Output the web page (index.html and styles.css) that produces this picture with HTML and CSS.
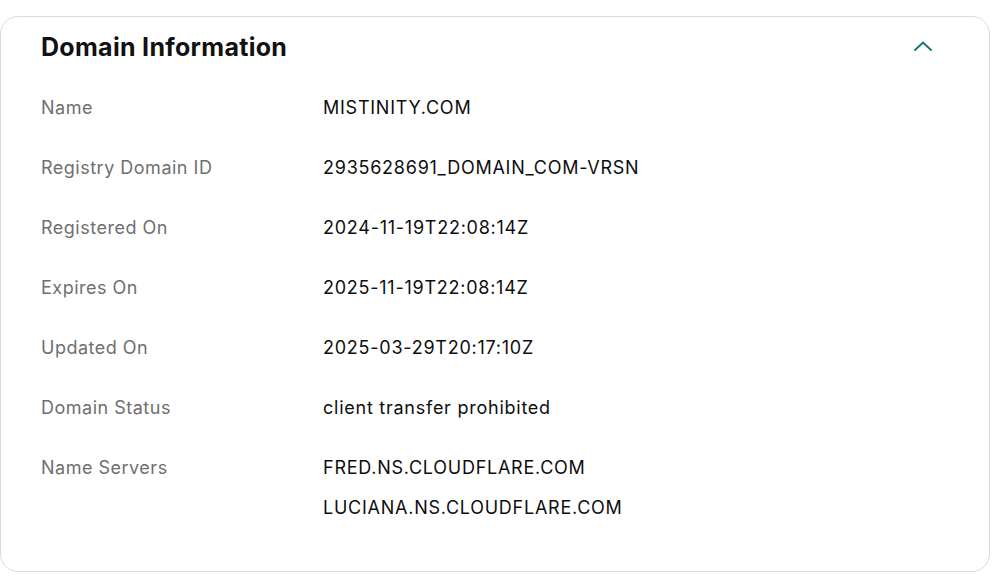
FILE: index.html
```html
<!DOCTYPE html>
<html lang="en">
<head>
<meta charset="utf-8">
<title>Domain Information</title>
<link rel="stylesheet" href="styles.css">
</head>
<body>
<section class="card">
  <header class="card-header">
    <h2 class="card-title">Domain Information</h2>
    <button class="toggle" aria-label="Collapse">
      <svg width="20" height="12" viewBox="0 0 20 12" aria-hidden="true">
        <path d="M2 10 L10 2.5 L18 10" fill="none" stroke="#137a78" stroke-width="2" stroke-linecap="round" stroke-linejoin="miter"/>
      </svg>
    </button>
  </header>
  <dl class="info">
    <dt>Name</dt>
    <dd>MISTINITY.COM</dd>
    <dt>Registry Domain ID</dt>
    <dd>2935628691_DOMAIN_COM-VRSN</dd>
    <dt>Registered On</dt>
    <dd>2024-11-19T22:08:14Z</dd>
    <dt>Expires On</dt>
    <dd>2025-11-19T22:08:14Z</dd>
    <dt>Updated On</dt>
    <dd>2025-03-29T20:17:10Z</dd>
    <dt>Domain Status</dt>
    <dd>client transfer prohibited</dd>
    <dt>Name Servers</dt>
    <dd class="list">
      <span>FRED.NS.CLOUDFLARE.COM</span>
      <span>LUCIANA.NS.CLOUDFLARE.COM</span>
    </dd>
  </dl>
</section>
</body>
</html>
```

FILE: styles.css
```css
html, body {
  margin: 0;
  padding: 0;
  background: #ffffff;
}
body {
  font-family: "Inter", "Noto Sans", sans-serif;
  color: #111111;
  padding-top: 16px;
}
.card {
  box-sizing: border-box;
  width: 990px;
  height: 556px;
  border: 1px solid #d6dce1;
  border-radius: 18px;
  padding: 14px 0 0 40px;
}
.card-header {
  display: flex;
  align-items: center;
  justify-content: space-between;
  height: 32px;
  padding-right: 56px;
}
.card-title {
  margin: 0;
  font-size: 25px;
  font-weight: 700;
  line-height: 32px;
  letter-spacing: 0.3px;
  color: #111111;
}
.toggle {
  border: 0;
  background: none;
  padding: 0;
  width: 20px;
  height: 12px;
  display: flex;
  margin-top: -3px;
}
.info {
  margin: 33px 0 0 0;
  display: grid;
  grid-template-columns: 282px 1fr;
  row-gap: 36px;
  font-size: 18px;
  line-height: 24px;
  letter-spacing: 0.5px;
}
.info dt {
  color: #6f6f6f;
}
.info dd {
  margin: 0;
  color: #0e0e0e;
  letter-spacing: 0.75px;
}
.info .list {
  display: flex;
  flex-direction: column;
  gap: 16px;
}
```
